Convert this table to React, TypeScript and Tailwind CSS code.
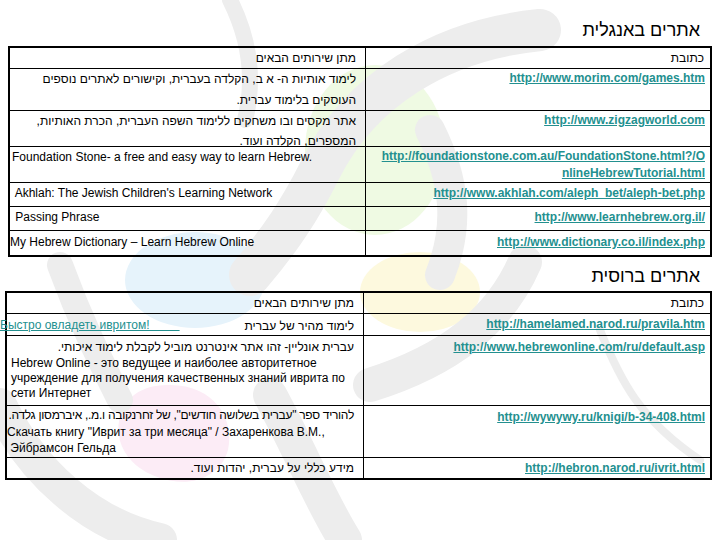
import React from "react";

const font = "font-['Liberation_Sans',Arial,sans-serif]";
const linkCls = "font-bold underline text-[#23908f] decoration-[#23908f]";

type RowProps = {
  h: string;
  right: React.ReactNode;
  left: React.ReactNode;
  rightW: string;
  last?: boolean;
};

const Row = ({ h, right, left, rightW, last }: RowProps) => (
  <div className={`flex ${h} ${last ? "" : "border-b border-black"}`}>
    <div className={`${rightW} shrink-0 border-l border-black pr-[5px]`}>{right}</div>
    <div className="flex-1 min-w-0">{left}</div>
  </div>
);

// faint logo watermark behind the tables
const Watermark = () => (
  <svg
    className="absolute inset-0 pointer-events-none"
    width="720"
    height="540"
    viewBox="0 0 720 540"
  >
    <ellipse cx="375" cy="150" rx="70" ry="85" fill="#effae3" />
    <ellipse cx="195" cy="280" rx="70" ry="48" fill="#e6f3fb" />
    <ellipse cx="420" cy="292" rx="60" ry="40" fill="#fdf9de" />
    <path d="M170 385 C215 385 235 420 228 450 C220 478 190 488 160 478 C120 465 110 430 125 405 C135 390 150 385 170 385 Z" fill="#fcecf6" />
    <g fill="none" stroke="#ededed" strokeLinecap="round">
      <path d="M540 30 C440 40 360 90 320 170 C300 210 280 240 250 275" strokeWidth="42" />
      <path d="M430 130 C455 180 460 225 440 275" strokeWidth="30" />
      <path d="M525 262 C500 320 450 360 370 385" strokeWidth="34" />
      <path d="M0 405 C30 470 90 525 160 540" strokeWidth="34" />
      <path d="M270 395 C300 450 320 500 345 540" strokeWidth="34" />
      <path d="M60 265 C80 320 100 360 120 400" strokeWidth="26" />
      <path d="M230 0 C250 40 255 80 245 120" strokeWidth="16" />
      <path d="M600 330 C620 380 640 420 700 460" strokeWidth="8" />
    </g>
  </svg>
);

export default function App() {
  return (
    <div className={`relative w-[720px] h-[540px] bg-white overflow-hidden text-black ${font}`}>
      <Watermark />
      <div className="relative flex flex-col" dir="rtl">
        {/* table 1 heading */}
        <div className="h-[46px] pt-[19px] pr-[20px]">
          <h2 className="text-[18px] leading-[22px]">אתרים באנגלית</h2>
        </div>

        <div className="mr-[8px] w-[704px] border-2 border-black text-[12px]">
          <Row
            h="h-[21px]"
            rightW="w-[345px]"
            right={<p className="leading-[20px] pr-[1px]">כתובת</p>}
            left={<p className="leading-[20px] pr-[9px]">מתן שירותים הבאים</p>}
          />
          <Row
            h="h-[42px]"
            rightW="w-[345px]"
            right={
              <p className="leading-[18px] text-right" dir="ltr">
                <a className={linkCls}>http://www.morim.com/games.htm</a>
              </p>
            }
            left={
              <p className="pr-[9px] leading-[21px]">
                לימוד אותיות ה- א ב, הקלדה בעברית, וקישורים לאתרים נוספים העוסקים בלימוד עברית.
              </p>
            }
          />
          <Row
            h="h-[36px]"
            rightW="w-[345px]"
            right={
              <p className="leading-[18px] text-right" dir="ltr">
                <a className={linkCls}>http://www.zigzagworld.com</a>
              </p>
            }
            left={
              <p className="pr-[9px] leading-[20px]">
                אתר מקסים ובו משחקים ללימוד השפה העברית, הכרת האותיות, המספרים, הקלדה ועוד.
              </p>
            }
          />
          <Row
            h="h-[36px]"
            rightW="w-[345px]"
            right={
              <p className="pt-[1px] leading-[17px] text-right" dir="ltr">
                <a className={linkCls}>
                  http://foundationstone.com.au/FoundationStone.html?/O
                  <br />
                  nlineHebrewTutorial.html
                </a>
              </p>
            }
            left={
              <p className="pt-[2px] pl-[2px] leading-[17px] text-left" dir="ltr">
                Foundation Stone- a free and easy way to learn Hebrew.
              </p>
            }
          />
          <Row
            h="h-[24px]"
            rightW="w-[345px]"
            right={
              <p className="pt-[2px] leading-[17px] text-right" dir="ltr">
                <a className={linkCls}>http://www.akhlah.com/aleph_bet/aleph-bet.php</a>
              </p>
            }
            left={
              <p className="pt-[2px] pl-[2px] leading-[17px] text-left whitespace-pre" dir="ltr">
                {" Akhlah: The Jewish Children's Learning Network"}
              </p>
            }
          />
          <Row
            h="h-[24px]"
            rightW="w-[345px]"
            right={
              <p className="pt-[2px] leading-[17px] text-right" dir="ltr">
                <a className={linkCls}>http://www.learnhebrew.org.il/</a>
              </p>
            }
            left={
              <p className="pt-[2px] pl-[2px] leading-[17px] text-left whitespace-pre" dir="ltr">
                {" Passing Phrase"}
              </p>
            }
          />
          <Row
            h="h-[24px]"
            rightW="w-[345px]"
            last
            right={
              <p className="pt-[3px] leading-[17px] text-right" dir="ltr">
                <a className={linkCls}>http://www.dictionary.co.il/index.php</a>
              </p>
            }
            left={
              <p className="pt-[3px] leading-[17px] text-left" dir="ltr">
                My Hebrew Dictionary – Learn Hebrew Online
              </p>
            }
          />
        </div>

        {/* table 2 heading */}
        <div className="h-[34px] pt-[8px] pr-[20px]">
          <h2 className="text-[18px] leading-[22px]">אתרים ברוסית</h2>
        </div>

        <div className="mr-[8px] w-[707px] border-2 border-black text-[12px]">
          <Row
            h="h-[21px]"
            rightW="w-[347px]"
            right={<p className="leading-[20px] pr-[1px]">כתובת</p>}
            left={<p className="leading-[20px] pr-[9px]">מתן שירותים הבאים</p>}
          />
          <Row
            h="h-[22px]"
            rightW="w-[347px]"
            right={
              <p className="pt-[1px] leading-[18px] text-right" dir="ltr">
                <a className={linkCls}>http://hamelamed.narod.ru/pravila.htm</a>
              </p>
            }
            left={
              <div className="flex items-center h-full pr-[9px]">
                <span className="leading-[18px] pt-[2px]">לימוד מהיר של עברית</span>
                <span className="flex-1" />
                <a
                  dir="ltr"
                  className="-ml-[7px] leading-[18px] underline text-[#23908f] whitespace-pre"
                >
                  {"Быстро овладеть ивритом!         "}
                </a>
              </div>
            }
          />
          <Row
            h="h-[70px]"
            rightW="w-[347px]"
            right={
              <p className="pt-[2px] leading-[18px] text-right" dir="ltr">
                <a className={linkCls}>http://www.hebrewonline.com/ru/default.asp</a>
              </p>
            }
            left={
              <div className="pt-[2px]">
                <p className="pr-[9px] leading-[18px]">
                  עברית אונליין- זהו אתר אינטרנט מוביל לקבלת לימוד איכותי.
                </p>
                <p className="pl-[4px] leading-[15px] text-left" dir="ltr">
                  Hebrew Online - это ведущее и наиболее авторитетное учреждение для получения качественных знаний иврита по сети Интернет
                </p>
              </div>
            }
          />
          <Row
            h="h-[52px]"
            rightW="w-[347px]"
            right={
              <p className="pt-[2px] leading-[18px] text-right" dir="ltr">
                <a className={linkCls}>http://wywywy.ru/knigi/b-34-408.html</a>
              </p>
            }
            left={
              <div className="pt-[1px]">
                <p className="pr-[9px] leading-[17px] whitespace-nowrap tracking-[-0.3px]">
                  להוריד ספר "עברית בשלושה חודשים", של זחרנקובה ו.מ., איברמסון גלדה.
                </p>
                <div className="text-left leading-[16px]" dir="ltr">
                  <p className="whitespace-pre">{"Скачать книгу \"Иврит за три месяца\" / Захаренкова В.М.,"}</p>
                  <p className="whitespace-pre">{" Эйбрамсон Гельда"}</p>
                </div>
              </div>
            }
          />
          <Row
            h="h-[20px]"
            rightW="w-[347px]"
            last
            right={
              <p className="pt-[1px] leading-[18px] text-right" dir="ltr">
                <a className={linkCls}>http://hebron.narod.ru/ivrit.html</a>
              </p>
            }
            left={<p className="pt-[1px] pr-[9px] leading-[18px]">מידע כללי על עברית, יהדות ועוד.</p>}
          />
        </div>
      </div>
    </div>
  );
}
